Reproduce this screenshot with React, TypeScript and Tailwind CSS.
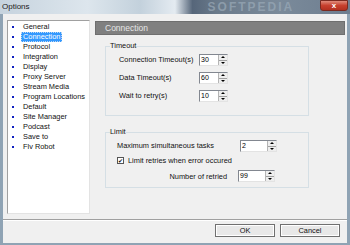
import React from 'react'

const items = [
  'General',
  'Connection',
  'Protocol',
  'Integration',
  'Display',
  'Proxy Server',
  'Stream Media',
  'Program Locations',
  'Default',
  'Site Manager',
  'Podcast',
  'Save to',
  'Flv Robot'
]

function Spinner ({ value, width }: { value: string, width: string }): React.ReactElement {
  return (
    <div className={`flex h-[12px] ${width} border border-t-[#828790] border-l-[#828790] border-b-[#e3e3e3] border-r-[#e3e3e3] bg-white`}>
      <div className="flex-1 pl-[1px] text-[7px] leading-[10px] text-black">{value}</div>
      <div className="flex w-[9px] flex-col border-l border-[#b5b5b5] bg-[#eeeeee]">
        <div className="flex flex-1 items-center justify-center border-b border-[#a0a0a0]">
          <div className="h-0 w-0 border-x-[2px] border-b-[2px] border-x-transparent border-b-black" />
        </div>
        <div className="flex flex-1 items-center justify-center">
          <div className="h-0 w-0 border-x-[2px] border-t-[2px] border-x-transparent border-t-black" />
        </div>
      </div>
    </div>
  )
}

export default function App (): React.ReactElement {
  return (
    <div className="flex h-[245px] w-[350px] flex-col overflow-hidden bg-[#8fa3b4] text-[7.4px] text-[#111111]" style={{ fontFamily: '"Liberation Sans", Arial, sans-serif' }}>
      {/* title bar */}
      <div className="relative flex h-[14px] items-center bg-[linear-gradient(to_right,#c6d3de_0%,#dde6ed_25%,#c3d1dc_40%,#e4ebf1_50%,#56667a_55%,#6a7a8a_62%,#7a8a9a_80%,#6e7e90_100%)] pl-[2px]">
        <span className="text-[8px] text-[#1a1a1a]">Options</span>
        <span className="ml-[178px] text-[12px] font-bold tracking-[2px] text-[#9aaab8] opacity-70">SOFTPEDIA</span>
        <div className="absolute right-[2px] top-0 flex h-[11px] w-[28px] items-center justify-center rounded-b-[3px] border border-[#7a2a20] bg-[linear-gradient(#e08a7a,#c7402e_50%,#b33020)] text-[8px] font-bold leading-none text-white">x</div>
      </div>

      {/* body */}
      <div className="mx-[3px] mb-[2px] flex flex-1 flex-col bg-[#f0f0f0]">
        <div className="flex pt-[6px]">
          <div className="ml-[4px] h-[194px] w-[83px] border border-t-[#a0a0a0] border-l-[#a0a0a0] border-b-[#e3e3e3] border-r-[#e3e3e3] bg-white pt-[1px]">
            {items.map(item => (
              <div key={item} className="flex h-[10px] items-center">
                <div className="ml-[4px] mr-[7px] h-[2px] w-[2px] bg-[#1020c0]" />
                <span className={item === 'Connection' ? 'border border-dotted border-[#c0d8f0] bg-[#3399ff] px-[1px] leading-[8px] text-white' : 'px-[2px] leading-[10px]'}>{item}</span>
              </div>
            ))}
          </div>

          <div className="ml-[5px] mr-[2px] flex flex-1 flex-col pt-[1px]">
            <div className="flex h-[14px] items-center border border-[#6f6f6f] bg-[#808080] pl-[9px] text-[8.5px] text-[#e6e6e6]">Connection</div>

            <fieldset className="ml-[10px] mt-[6px] h-[75px] w-[204px] border border-[#d5dfe5] pl-[13px]">
              <legend className="-ml-[9px] px-0 leading-[10px]">Timeout</legend>
              <div className="flex flex-col gap-[6px] pt-[3px]">
                {[['Connection Timeout(s)', '30'], ['Data Timeout(s)', '60'], ['Wait to retry(s)', '10']].map(([label, value]) => (
                  <div key={label} className="flex items-center">
                    <span className="w-[80px]">{label}</span>
                    <Spinner value={value} width="w-[29px]" />
                  </div>
                ))}
              </div>
            </fieldset>

            <fieldset className="ml-[10px] mt-[11px] h-[61px] w-[204px] border border-[#d5dfe5] pl-[11px]">
              <legend className="-ml-[7px] px-0 leading-[10px]">Limit</legend>
              <div className="flex items-center pt-[3px]">
                <span className="w-[123px]">Maximum simultaneous tasks</span>
                <Spinner value="2" width="w-[37px]" />
              </div>
              <div className="mt-[3px] flex items-center">
                <div className="flex h-[7px] w-[7px] items-center justify-center border border-[#555555] bg-white text-[6px] leading-none">✔</div>
                <span className="ml-[4px]">Limit retries when error occured</span>
              </div>
              <div className="mt-[4px] flex items-center">
                <span className="w-[110px] text-right">Number of retried</span>
                <div className="ml-[11px]">
                  <Spinner value="99" width="w-[37px]" />
                </div>
              </div>
            </fieldset>
          </div>
        </div>

        <div className="mt-[5px] border-t border-b border-t-[#a0a0a0] border-b-white" />

        <div className="flex justify-end gap-[5px] pr-[7px] pt-[3px]">
          <button className="h-[13px] w-[60px] border border-[#707070] bg-[#e8e8e8] text-[7.4px] leading-none shadow-[inset_0_0_0_1px_#ffffff]" type="button">OK</button>
          <button className="h-[13px] w-[60px] border border-[#707070] bg-[#e8e8e8] text-[7.4px] leading-none shadow-[inset_0_0_0_1px_#ffffff]" type="button">Cancel</button>
        </div>
      </div>
    </div>
  )
}
